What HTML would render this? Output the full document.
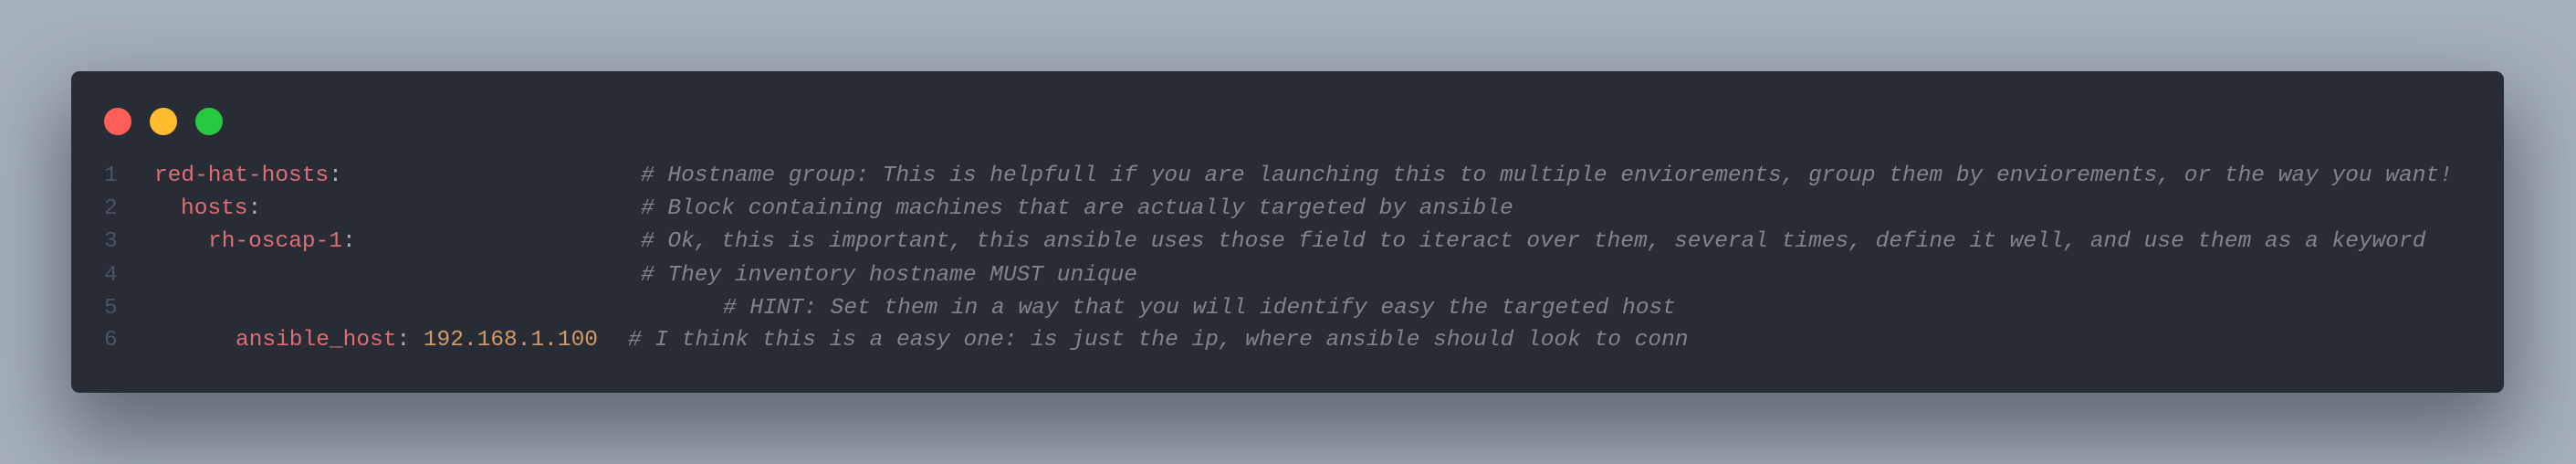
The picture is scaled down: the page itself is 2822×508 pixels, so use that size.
<!DOCTYPE html>
<html><head><style>
html,body{margin:0;padding:0;}
body{width:2822px;height:508px;background:#a7b1bb;position:relative;overflow:hidden;}
.card{position:absolute;left:78px;top:78px;width:2665px;height:352px;background:#272c35;border-radius:9px;box-shadow:0 40px 90px 10px rgba(40,46,56,0.55);}
.dot{position:absolute;top:118px;width:30px;height:30px;border-radius:50%;}
.l{position:absolute;font-family:"Liberation Mono",monospace;font-size:24.5px;white-space:pre;line-height:36px;}
.n{color:#4b5263;left:114px;}
.k{color:#e06c75}.p{color:#abb2bf}.v{color:#d19a66}
.c{color:#7f848e;font-style:italic;}
</style></head><body>
<div class="card"></div>
<div class="dot" style="left:114px;background:#ff5f57"></div>
<div class="dot" style="left:164px;background:#febc2e"></div>
<div class="dot" style="left:214px;background:#28c840"></div>

<div class="l n" style="top:175px">1</div>
<div class="l n" style="top:211px">2</div>
<div class="l n" style="top:247px">3</div>
<div class="l n" style="top:284px">4</div>
<div class="l n" style="top:320px">5</div>
<div class="l n" style="top:355px">6</div>

<div class="l" style="left:169px;top:175px"><span class="k">red-hat-hosts</span><span class="p">:</span></div>
<div class="l" style="left:198px;top:211px"><span class="k">hosts</span><span class="p">:</span></div>
<div class="l" style="left:228px;top:247px"><span class="k">rh-oscap-1</span><span class="p">:</span></div>
<div class="l" style="left:258px;top:355px"><span class="k">ansible_host</span><span class="p">: </span><span class="v">192.168.1.100</span></div>

<div class="l c" style="left:702px;top:175px"># Hostname group: This is helpfull if you are launching this to multiple enviorements, group them by enviorements, or the way you want!</div>
<div class="l c" style="left:702px;top:211px"># Block containing machines that are actually targeted by ansible</div>
<div class="l c" style="left:702px;top:247px"># Ok, this is important, this ansible uses those field to iteract over them, several times, define it well, and use them as a keyword</div>
<div class="l c" style="left:702px;top:284px"># They inventory hostname MUST unique</div>
<div class="l c" style="left:792px;top:320px"># HINT: Set them in a way that you will identify easy the targeted host</div>
<div class="l c" style="left:688px;top:355px"># I think this is a easy one: is just the ip, where ansible should look to conn</div>
</body></html>
